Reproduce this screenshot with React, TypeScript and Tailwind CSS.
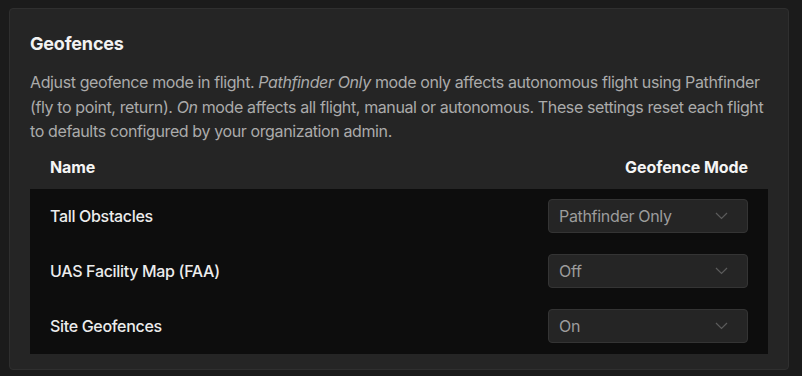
const rows = [
  { name: "Tall Obstacles", mode: "Pathfinder Only" },
  { name: "UAS Facility Map (FAA)", mode: "Off" },
  { name: "Site Geofences", mode: "On" },
];

function Chevron() {
  return (
    <svg width="13" height="8" viewBox="0 0 13 8" fill="none" className="text-[#5c5c5c]">
      <polyline points="1,1 6.5,6.5 12,1" stroke="currentColor" strokeWidth="1.2" />
    </svg>
  );
}

function ModeSelect({ value }: { value: string }) {
  return (
    <div className="flex h-[34px] w-[200px] items-center justify-between rounded-[4px] border border-[#343434] bg-[#252525] pl-[10px] pr-[19px]">
      <span className="text-[16px] tracking-[-0.02em] text-[#9c9c9c]">{value}</span>
      <Chevron />
    </div>
  );
}

export default function App() {
  return (
    <div
      className="min-h-[376px] w-full bg-[#1b1b1b] px-[9px] pt-[8px]"
      style={{ fontFamily: "Inter, 'Noto Sans', sans-serif" }}
    >
      <div className="w-[780px] rounded-[4px] border border-[#2f2f2f] bg-[#252525] px-[20px] pt-[21px] pb-[15px]">
        <h2 className="text-[18px] leading-[28px] font-bold tracking-[-0.01em] text-[#f2f2f2]">Geofences</h2>
        <p className="mt-[12px] text-[16px] leading-[24.5px] tracking-[-0.024em] text-[#ababab]">
          Adjust geofence mode in flight. <em>Pathfinder Only</em> mode only affects autonomous flight using Pathfinder
          (fly to point, return). <em>On</em> mode affects all flight, manual or autonomous. These settings reset each
          flight to defaults configured by your organization admin.
        </p>
        <div className="flex items-center justify-between px-[20px] pt-[11px] pb-[10px] text-[16px] leading-[24px] font-bold tracking-[-0.005em] text-[#f5f5f5]">
          <span>Name</span>
          <span>Geofence Mode</span>
        </div>
        <div className="bg-[#0d0d0d]">
          {rows.map((row) => (
            <div key={row.name} className="flex h-[55px] items-center justify-between px-[20px]">
              <span className="text-[16px] font-medium tracking-[-0.02em] text-[#ececec]">{row.name}</span>
              <ModeSelect value={row.mode} />
            </div>
          ))}
        </div>
      </div>
    </div>
  );
}
